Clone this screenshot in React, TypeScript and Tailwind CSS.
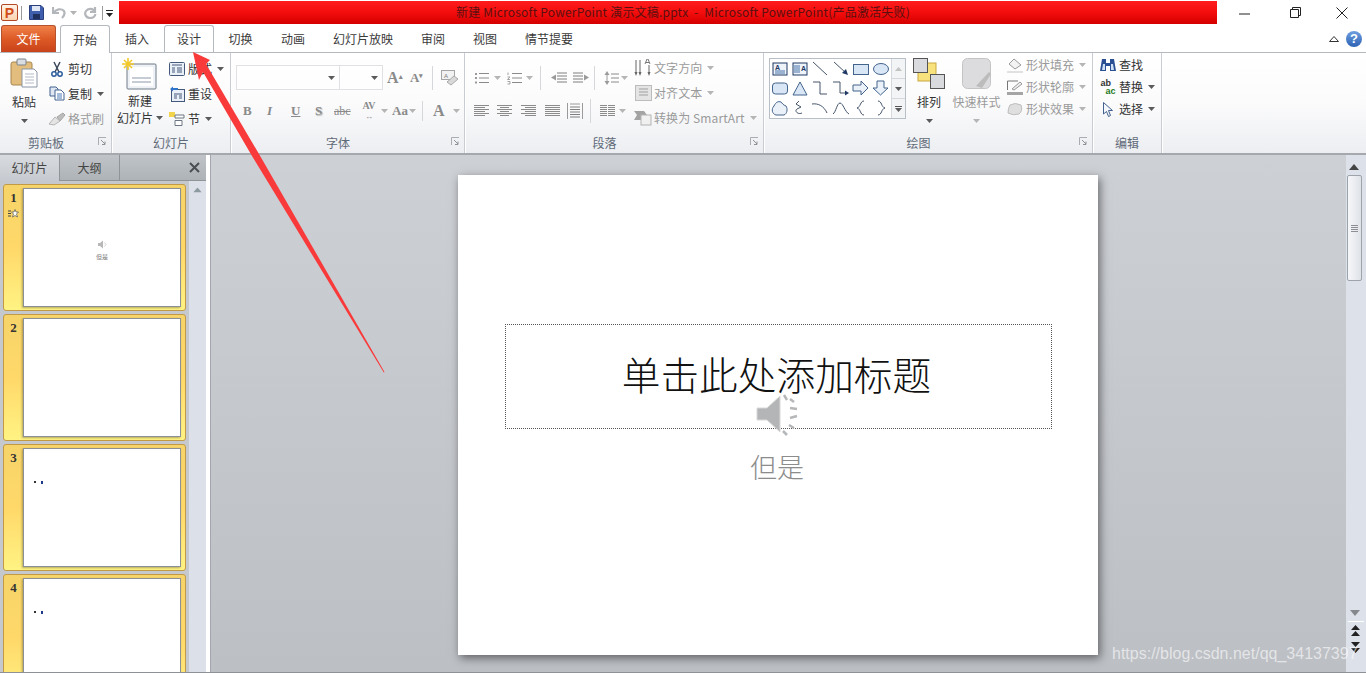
import React from "react";

const FONT = "font-['Noto_Sans_CJK_SC','Noto_Sans',sans-serif]";

function Caret({ c = "#5a5a5a", className = "" }: { c?: string; className?: string }) {
  return (
    <svg width="7" height="4" viewBox="0 0 7 4" className={className}>
      <path d="M0 0H7L3.5 4Z" fill={c} />
    </svg>
  );
}

function Launcher() {
  return (
    <svg width="9" height="9" viewBox="0 0 9 9" className="absolute right-[4px] top-[6px]">
      <path d="M0.5 8V0.5H8" fill="none" stroke="#a9adb3" />
      <path d="M3 3L7 7M7 4.5V7.5H4" fill="none" stroke="#8d9298" />
    </svg>
  );
}

function Group({ w, label, launcher, children }: { w: string; label: string; launcher?: boolean; children: React.ReactNode }) {
  return (
    <div className={`${w} flex flex-col h-full shrink-0 border-r border-[#c9cdd3] shadow-[1px_0_0_#ffffff]`}>
      <div className="flex-1 flex min-h-0">{children}</div>
      <div className={`h-[22px] relative text-center text-[12px] leading-[24px] text-[#5f6a78] ${launcher ? "pr-[19px]" : ""}`}>
        {label}
        {launcher && <Launcher />}
      </div>
    </div>
  );
}

function Small({ icon, label, caret, off, h = "h-[25px]" }: { icon: React.ReactNode; label: string; caret?: boolean; off?: boolean; h?: string }) {
  return (
    <div className={`${h} flex items-center gap-[2px] text-[12px] whitespace-nowrap ${off ? "text-[#9a9a9a]" : "text-[#333]"}`}>
      <span className="w-[18px] h-[18px] flex items-center justify-center shrink-0">{icon}</span>
      <span>{label}</span>
      {caret && <Caret className="ml-[3px]" c={off ? "#b5b5b5" : "#5a5a5a"} />}
    </div>
  );
}

function Lines({ rows, w = 15, c = "#8b8b8b" }: { rows: [number, number][]; w?: number; c?: string }) {
  return (
    <svg width={w} height="14" viewBox={`0 0 ${w} 14`}>
      {rows.map(([x1, x2], i) => (
        <path key={i} d={`M${x1} ${1.5 + i * 2}H${x2}`} stroke={c} />
      ))}
    </svg>
  );
}

function Sep({ h = "h-[24px]" }: { h?: string }) {
  return <span className={`w-px ${h} bg-[#d5d7da] shrink-0 block`} />;
}

const Paste = () => (
  <svg width="28" height="30" viewBox="0 0 28 30">
    <rect x="1" y="4" width="21" height="23" rx="2" fill="#e2bd7d" stroke="#a98650" />
    <rect x="7" y="1" width="9" height="6" rx="1" fill="#d9dde2" stroke="#7a8088" />
    <path d="M12 11H24L27 14V29H12Z" fill="#fff" stroke="#8b96a5" />
    <path d="M15 16H24M15 19H24M15 22H24M15 25H24" stroke="#b3bac4" />
  </svg>
);
const Scissors = () => (
  <svg width="14" height="16" viewBox="0 0 14 16">
    <path d="M4 1L9 11M10 1L5 11" stroke="#3d4a5a" strokeWidth="1.5" />
    <circle cx="4" cy="13" r="2.2" fill="none" stroke="#2c5c9c" strokeWidth="1.5" />
    <circle cx="10" cy="13" r="2.2" fill="none" stroke="#2c5c9c" strokeWidth="1.5" />
  </svg>
);
const CopyI = () => (
  <svg width="16" height="15" viewBox="0 0 16 15">
    <path d="M1 1H7L9 3V10H1Z" fill="#dfe7f2" stroke="#43628f" />
    <path d="M6 4H12L15 7V14H6Z" fill="#fff" stroke="#43628f" />
    <path d="M8 8H13M8 10H13M8 12H13" stroke="#4a78b5" />
  </svg>
);
const Brush = () => (
  <svg width="18" height="14" viewBox="0 0 18 14">
    <path d="M9 5L15 1L17 3L12 9Z" fill="#bdbdbd" stroke="#a5a5a5" />
    <path d="M1 12L7 5L12 9L6 13Z" fill="#e4e4e4" stroke="#b4b4b4" />
  </svg>
);
const NewSlide = () => (
  <svg width="36" height="32" viewBox="0 0 36 32">
    <rect x="5" y="6" width="29" height="25" rx="1" fill="#eef1f5" stroke="#6f7a87" />
    <rect x="8" y="9" width="23" height="19" fill="#fff" />
    <path d="M10 19H29V21H10ZM10 23H29V25H10Z" fill="#c6ccd4" />
    <g stroke="#f2c82c" strokeWidth="1.6"><path d="M6 0V12M0 6H12M2 2L10 10M10 2L2 10" /></g>
  </svg>
);
const LayoutI = () => (
  <svg width="16" height="14" viewBox="0 0 16 14">
    <rect x=".5" y=".5" width="15" height="13" rx="1" fill="#eaf0f7" stroke="#44587a" />
    <path d="M3 3H13M3 6H6M8 6H13M3 8H6M8 8H13M3 10H6M8 10H13" stroke="#44587a" />
  </svg>
);
const ResetI = () => (
  <svg width="16" height="16" viewBox="0 0 16 16">
    <rect x="2.5" y="3.5" width="13" height="12" fill="#eaf0f7" stroke="#44587a" />
    <path d="M5 8H13M5 10H8M10 10H13M5 12H8M10 12H13" stroke="#44587a" />
    <path d="M1 3L4 0.5V2H9V4H4V5.5Z" fill="#2f75c9" />
  </svg>
);
const SectionI = () => (
  <svg width="16" height="14" viewBox="0 0 16 14">
    <rect x="0" y="0" width="6" height="5" fill="#f2d44c" />
    <path d="M6 3H15V6H6ZM6 8.5H13V13.5H6Z" fill="#fff" stroke="#6d7682" />
  </svg>
);

const Bullet = () => (
  <svg width="15" height="14" viewBox="0 0 15 14"><path d="M5 2.5H15M5 7H15M5 11.5H15" stroke="#8b8b8b" /><path d="M1 2H3V4H1ZM1 6H3V8H1ZM1 10.5H3V12.5H1Z" fill="#9a9a9a" /></svg>
);
const Number = () => (
  <svg width="15" height="14" viewBox="0 0 15 14"><path d="M5 2.5H15M5 7H15M5 11.5H15" stroke="#8b8b8b" /><path d="M1 1.5V4M0.5 6H3L0.5 8.5H3M0.5 10.5H3V13H0.5" fill="none" stroke="#a3a3a3" /></svg>
);
const Indent = ({ flip }: { flip?: boolean }) => (
  <svg width="16" height="14" viewBox="0 0 16 14" className="block">
    <path d={flip ? "M0 2H10M0 5H10M0 8H10M0 11H10" : "M6 2H16M6 5H16M6 8H16M6 11H16"} stroke="#7f7f7f" />
    <path d={flip ? "M16 6.5L11 3.5V9.5Z" : "M0 6.5L5 3.5V9.5Z"} fill="#9a9a9a" />
  </svg>
);
const LineSp = () => (
  <svg width="16" height="16" viewBox="0 0 16 16" className="block"><path d="M3 1L5.5 5H.5ZM3 15L5.5 11H.5Z" fill="#9a9a9a" /><path d="M3 5V11" stroke="#9a9a9a" /><path d="M7 4H15M7 8H15M7 12H15" stroke="#8b8b8b" /></svg>
);
const TextDir = () => (
  <svg width="18" height="18" viewBox="0 0 18 18"><path d="M2 1V15M6 1V15M15 6V15" stroke="#666" /><path d="M.5 13L2 17L3.5 13ZM4.5 13L6 17L7.5 13ZM13.5 13L15 17L16.5 13Z" fill="#666" /><path d="M11 5L13 0H14L16 5M12 3.5H15" fill="none" stroke="#777" /></svg>
);
const AlignT = () => (
  <svg width="17" height="16" viewBox="0 0 17 16"><rect x=".5" y=".5" width="16" height="15" fill="#e4e4e4" stroke="#bcbcbc" /><path d="M4 4H13M4 7H13M4 10H13" stroke="#9f9f9f" /></svg>
);
const SmartA = () => (
  <svg width="18" height="16" viewBox="0 0 18 16"><path d="M0 1H10L13 5L10 10H0L3 5Z" fill="#a3a3a3" /><rect x="7" y="5" width="10" height="10" fill="#f0f0f0" stroke="#b3b3b3" /></svg>
);

const sh = { stroke: "#44546a", fill: "none" };
const bf = "#d9e6f5";
const shapes: React.ReactNode[] = [
  <g key="a"><rect x="2" y="2" width="14" height="12" fill="#eef3fa" stroke="#1f3864" /><path d="M4 10H14M4 12H14" stroke="#4472a8" /><text x="4" y="9" fontSize="7" fontWeight="700" fontFamily="Liberation Sans" fill="#1f3864">A</text></g>,
  <g key="b"><rect x="2" y="2" width="14" height="12" fill="#eef3fa" stroke="#1f3864" /><path d="M4 4V12M6 4V12M8 4V12" stroke="#4472a8" /><text x="10" y="10" fontSize="7" fontWeight="700" fontFamily="Liberation Sans" fill="#1f3864">A</text></g>,
  <path key="c" d="M2 1L16 14" {...sh} />,
  <g key="d"><path d="M2 1L14 12" {...sh} /><path d="M16 14L10 12L14 8Z" fill="#1f3864" /></g>,
  <rect key="e" x="1.5" y="3.5" width="15" height="10" fill={bf} stroke="#44648c" />,
  <ellipse key="f" cx="9" cy="8" rx="7.5" ry="5.5" fill={bf} stroke="#44648c" />,
  <rect key="g" x="1.5" y="3" width="15" height="11" rx="3" fill={bf} stroke="#44648c" />,
  <path key="h" d="M9 2L16 15H2Z" fill={bf} stroke="#44648c" />,
  <path key="i" d="M2 2H9V14H16" {...sh} />,
  <g key="j"><path d="M1 2H8V13H14" {...sh} /><path d="M17 13L13 10.5V15.5Z" fill="#1f3864" /></g>,
  <path key="k" d="M1 5H9V1L16 8L9 15V11H1Z" fill="#eaf1f9" stroke="#44648c" />,
  <path key="l" d="M5 1H12V8H16L8.500 15L1 8H5Z" fill="#eaf1f9" stroke="#44648c" />,
  <path key="m" d="M3 6C5 2 7 1 10 2C11 3 12 5 15 6C17 9 16 14 13 15H5C1 14 0 9 3 6Z" fill="#eaf1f9" stroke="#44648c" />,
  <path key="n" d="M8 1L5 4L10 7L6 9C3 11 7 15 11 13" {...sh} />,
  <path key="o" d="M1 4C7 3 13 6 16 13" {...sh} />,
  <path key="p" d="M1 14C4 12 5 3 8 3C11 3 13 12 17 14" {...sh} />,
  <path key="q" d="M12 1C8 1 9 7 5 8C9 9 8 15 12 15" {...sh} />,
  <path key="r" d="M6 1C10 1 9 7 13 8C9 9 10 15 6 15" {...sh} />,
];

function Arrow() {
  return (
    <svg width="260" height="340" viewBox="0 0 260 340" className="absolute left-[180px] top-[45px] pointer-events-none">
      <path d="M13 7L30 15L26 19L79 109L204.500 327L203.800 327.500L72 111L23 27L19 35Z" fill="#f93a3a" />
    </svg>
  );
}

function Thumb({ n, star, children }: { n: number; star?: boolean; children?: React.ReactNode }) {
  return (
    <div className="h-[127px] shrink-0 rounded-[3px] border border-[#c29a45] bg-gradient-to-b from-[#f6d469] via-[#ffd869] to-[#fff383] flex pt-[3px] pr-[3px]">
      <div className="w-[19px] shrink-0 flex flex-col items-center">
        <span className="text-[13px] leading-[16px] font-bold text-[#333] font-['Liberation_Serif',serif] pt-[2px]">{n}</span>
        {star && (
          <svg width="11" height="9" viewBox="0 0 11 9" className="mt-[3px]">
            <path d="M0 2H3M0 4.500H3M0 7H3" stroke="#444" />
            <path d="M7 .5L8 3H10.500L8.500 5L9.500 8L7 6.500L4.500 8L5.500 5L3.500 3H6Z" fill="#fff" stroke="#555" strokeWidth=".7" />
          </svg>
        )}
      </div>
      <div className="w-[158px] h-[119px] bg-white border border-[#8b9096] shadow-[-1px_1px_2px_#0000004d] flex flex-col items-center justify-center relative">
        {children}
      </div>
    </div>
  );
}

const Speaker = ({ s = 1 }: { s?: number }) => (
  <svg width={44 * s} height={44 * s} viewBox="0 0 44 44">
    <path d="M1 16H11L24 4V40L11 28H1Z" fill="#b3b5b7" stroke="#d8d8d8" />
    <g stroke="#b5b7b9" strokeWidth="2.500" fill="none">
      <path d="M28 3L31 8M34 7L38 10M34 16L41 17M34 26L41 24M33 33L38 36M27 39L31 43" />
    </g>
  </svg>
);

export default function App() {
  return (
    <div className={`relative w-[1366px] h-[673px] overflow-hidden bg-white flex flex-col ${FONT}`}>
      {/* title bar */}
      <div className="h-[25px] shrink-0 flex items-center bg-white">
        <div className="w-[17px] h-[17px] ml-[1px] rounded-[2px] border border-[#b24a26] bg-gradient-to-b from-[#fff3e6] to-[#fbd4b0] flex items-center justify-center text-[14px] font-bold text-[#d24c18] font-['Liberation_Sans',sans-serif] leading-none">
          P
        </div>
        <span className="w-px h-[14px] bg-[#9a9a9a] ml-[3px]" />
        <svg width="15" height="15" viewBox="0 0 15 15" className="ml-[7px]">
          <path d="M.5.5H12L14.500 3V14.500H.5Z" fill="#3f5fae" stroke="#2a3f7c" />
          <rect x="3" y="1" width="8" height="5" fill="#dfe7f5" />
          <rect x="4" y="9" width="7" height="5" fill="#1f2f5c" />
        </svg>
        <svg width="14" height="13" viewBox="0 0 14 13" className="ml-[8px]">
          <path d="M1 1V7H7M1.500 7C4 3 9 2 12 5C13 7 12 10 10 12" fill="none" stroke="#b3b6ba" strokeWidth="2.200" />
        </svg>
        <Caret className="ml-[4px]" c="#b3b3b3" />
        <svg width="13" height="13" viewBox="0 0 13 13" className="ml-[7px]">
          <path d="M11 1V6H6M11 6C9 2 4 2 2 5C0 8 2 12 6 12C9 12 11 10 11.500 8" fill="none" stroke="#b3b6ba" strokeWidth="2.200" />
        </svg>
        <span className="w-px h-[14px] bg-[#9a9a9a] ml-[5px]" />
        <svg width="8" height="8" viewBox="0 0 8 8" className="ml-[3px]">
          <path d="M0 1H7V2H0ZM0 4H7L3.500 8Z" fill="#222" />
        </svg>
        <div className="ml-[5px] w-[1098px] h-[23px] mt-[-1px] pl-[30px] bg-gradient-to-b from-[#ff1c1c] via-[#f40d0d] to-[#d40000] flex items-center justify-center text-[12px] text-[#5a1010] whitespace-pre tracking-[0.2px]">
          <span>新建 Microsoft PowerPoint 演示文稿.pptx  -  Microsoft PowerPoint(产品激活失败)</span>
        </div>
        <svg width="12" height="2" viewBox="0 0 12 2" className="ml-[22px] mt-[2px]"><path d="M0 1H11" stroke="#222" /></svg>
        <svg width="11" height="11" viewBox="0 0 11 11" className="ml-[39px]"><path d="M.5 2.500H8.500V10.500H.5ZM2.500 2.500V.5H10.500V8.500H8.500" fill="none" stroke="#222" /></svg>
        <svg width="12" height="12" viewBox="0 0 12 12" className="ml-[35px]"><path d="M.5.5L11.500 11.500M11.500.5L.5 11.500" stroke="#222" /></svg>
      </div>

      {/* tab row */}
      <div className="h-[28px] shrink-0 flex items-end border-b border-[#b4b9c0] bg-white text-[12px] text-[#3b3b3b] relative">
        <div className="w-[55px] h-[27px] ml-[1px] rounded-t-[3px] bg-gradient-to-b from-[#ef8048] via-[#dd5a26] to-[#c8431a] border border-[#b5522d] border-b-0 text-white flex items-center justify-center">文件</div>
        <div className="w-[50px] h-[28px] ml-[4px] rounded-t-[3px] border border-[#b4b9c0] border-b-0 bg-white flex items-center justify-center mb-[-1px]">开始</div>
        <div className="w-[54px] h-[27px] flex items-center justify-center">插入</div>
        <div className="w-[50px] h-[27px] rounded-t-[3px] border border-[#b4b9c0] border-b-0 flex items-center justify-center">设计</div>
        <div className="w-[53px] h-[27px] flex items-center justify-center">切换</div>
        <div className="w-[52px] h-[27px] flex items-center justify-center">动画</div>
        <div className="w-[88px] h-[27px] flex items-center justify-center">幻灯片放映</div>
        <div className="w-[50px] h-[27px] flex items-center justify-center mx-[1px]">审阅</div>
        <div className="w-[52px] h-[27px] flex items-center justify-center">视图</div>
        <div className="w-[76px] h-[27px] flex items-center justify-center">情节提要</div>
        <div className="flex-1 h-[27px] flex items-center justify-end pr-[4px] gap-[7px]">
          <svg width="10" height="7" viewBox="0 0 10 7"><path d="M.5 6.500L5 1.500L9.500 6.500Z" fill="none" stroke="#333" /></svg>
          <span className="w-[16px] h-[16px] rounded-full bg-gradient-to-b from-[#6f9fe0] to-[#2d62b4] text-white text-[13px] font-bold leading-[16px] text-center font-['Liberation_Sans',sans-serif]">?</span>
        </div>
      </div>

      {/* ribbon */}
      <div className="h-[102px] shrink-0 flex bg-gradient-to-b from-white via-[#fbfbfc] to-[#eceef1] border-b-2 border-[#a5a9ae]">
        <Group w="w-[112px]" label="剪贴板" launcher>
          <div className="w-[48px] flex flex-col items-center pt-[5px] text-[12px] text-[#333]">
            <Paste />
            <span className="mt-[5px] leading-[18px]">粘贴</span>
            <Caret className="mt-[8px]" />
          </div>
          <div className="flex flex-col pt-[3px]">
            <Small icon={<Scissors />} label="剪切" />
            <Small icon={<CopyI />} label="复制" caret />
            <Small icon={<Brush />} label="格式刷" off />
          </div>
        </Group>

        <Group w="w-[119px]" label="幻灯片">
          <div className="w-[56px] flex flex-col items-center pt-[5px] text-[12px] leading-[17px] text-[#333]">
            <NewSlide />
            <span className="mt-[2px]">新建</span>
            <span className="whitespace-nowrap flex items-center gap-[3px]">幻灯片<Caret /></span>
          </div>
          <div className="flex flex-col pt-[3px]">
            <Small icon={<LayoutI />} label="版式" caret />
            <Small icon={<ResetI />} label="重设" />
            <Small icon={<SectionI />} label="节" caret />
          </div>
        </Group>

        <Group w="w-[234px]" label="字体" launcher>
          <div className="flex flex-col pl-[5px] pt-[12px]">
            <div className="flex items-center h-[25px]">
              <div className="w-[104px] h-[25px] border border-[#dfe1e4] bg-white/60 flex items-center justify-end pr-[4px]"><Caret /></div>
              <div className="w-[43px] h-[25px] border border-[#dfe1e4] border-l-0 bg-white/60 flex items-center justify-end pr-[4px]"><Caret /></div>
              <span className="ml-[4px] text-[16px] font-bold text-[#8a8a8a] font-['Liberation_Serif',serif] w-[23px]">A<sup className="text-[7px]">▴</sup></span>
              <span className="text-[13px] font-bold text-[#8a8a8a] font-['Liberation_Serif',serif] w-[22px]">A<sup className="text-[7px]">▾</sup></span>
              <Sep />
              <svg width="18" height="16" viewBox="0 0 18 16" className="ml-[8px]"><rect x=".5" y=".5" width="13" height="9" fill="#f2f2f2" stroke="#a5a5a5" /><text x="3" y="8" fontSize="6" fontFamily="Liberation Sans" fill="#777">A</text><path d="M6 12L13 6L17 9L10 15Z" fill="#d9d9d9" stroke="#a9a9a9" /></svg>
            </div>
            <div className="flex items-center h-[22px] mt-[10px] pl-[7px] text-[#8a8a8a] font-['Liberation_Serif',serif] font-bold text-[13px]">
              <span className="w-[24px]">B</span>
              <span className="w-[24px] italic">I</span>
              <span className="w-[24px] underline">U</span>
              <span className="w-[19px] [text-shadow:1px_1px_1px_#aaa]">S</span>
              <span className="w-[23px] font-normal line-through text-[12px]">abc</span>
              <span className="w-[24px] text-[10px] leading-[10px] text-center">AV<br /><span className="text-[8px]">↔</span></span>
              <Caret className="mr-[4px]" c="#b5b5b5" />
              <span className="w-[17px] text-[13px]">Aa</span>
              <Caret className="mr-[6px]" c="#b5b5b5" />
              <Sep h="h-[20px]" />
              <span className="ml-[10px] text-[16px] w-[18px]">A</span>
              <Caret className="ml-[2px]" c="#b5b5b5" />
            </div>
          </div>
        </Group>

        <Group w="w-[299px]" label="段落" launcher>
          <div className="flex flex-col pl-[9px] pt-[12px] w-[169px]">
            <div className="flex items-center h-[25px]">
              <Bullet /><Caret className="ml-[5px] mr-[6px]" c="#b5b5b5" />
              <Number /><Caret className="ml-[4px] mr-[7px]" c="#b5b5b5" />
              <Sep />
              <span className="ml-[10px]"><Indent /></span>
              <span className="ml-[6px]"><Indent flip /></span>
              <span className="ml-[5px]"><Sep /></span>
              <span className="ml-[9px]"><LineSp /></span>
              <Caret className="ml-[1px]" c="#b5b5b5" />
            </div>
            <div className="flex items-center h-[22px] mt-[10px]">
              <Lines rows={[[0,15],[0,11],[0,15],[0,11],[0,15],[0,11]]} />
              <span className="ml-[8px] block h-[14px]"><Lines rows={[[0,15],[3,12],[0,15],[3,12],[0,15],[3,12]]} /></span>
              <span className="ml-[9px] block h-[14px]"><Lines rows={[[0,15],[4,15],[0,15],[4,15],[0,15],[4,15]]} /></span>
              <span className="ml-[9px] block h-[14px]"><Lines rows={[[0,15],[0,15],[0,15],[0,15],[0,15],[0,15]]} /></span>
              <span className="ml-[7px] block h-[16px]">
                <svg width="16" height="16" viewBox="0 0 16 16"><path d="M.5 0V16M15.500 0V16M3 1H13" stroke="#9a9a9a" /><path d="M3 4H13M3 6.500H13M3 9H13M3 11.500H13M3 14H13" stroke="#7f7f7f" /></svg>
              </span>
              <span className="ml-[7px]"><Sep /></span>
              <span className="ml-[9px] block h-[14px]"><Lines rows={[[0,7],[0,7],[0,7],[0,7],[0,7],[0,7]]} w={7} /></span>
              <span className="ml-px block h-[14px]"><Lines rows={[[0,7],[0,7],[0,7],[0,7],[0,7],[0,7]]} w={7} /></span>
              <Caret className="ml-[4px]" c="#b5b5b5" />
            </div>
          </div>
          <div className="flex flex-col pt-[2px] text-[#8d8d8d] tracking-[0.1px]">
            <Small icon={<TextDir />} label="文字方向" caret off />
            <Small icon={<AlignT />} label="对齐文本" caret off />
            <Small icon={<SmartA />} label="转换为 SmartArt" caret off />
          </div>
        </Group>

        <Group w="w-[329px]" label="绘图" launcher>
          <div className="ml-[5px] mt-[5px] w-[137px] h-[61px] border border-[#b9bfc7] bg-white flex shrink-0">
            <div className="w-[121px] grid grid-cols-6 grid-rows-3">
              {shapes.map((s, i) => (
                <div key={i} className="flex items-center justify-center">
                  <svg width="18" height="16" viewBox="0 0 18 16">{s}</svg>
                </div>
              ))}
            </div>
            <div className="w-[14px] flex flex-col border-l border-[#d5d9de] bg-[#f3f4f6]">
              <div className="flex-1 flex items-center justify-center"><Caret className="rotate-180" c="#c2c2c2" /></div>
              <div className="flex-1 flex items-center justify-center border-y border-[#d5d9de]"><Caret /></div>
              <div className="flex-1 flex flex-col items-center justify-center gap-[1px]"><span className="w-[7px] h-px bg-[#555]" /><Caret /></div>
            </div>
          </div>
          <div className="w-[44px] ml-[1px] flex flex-col items-center pt-[5px] text-[12px] text-[#333] shrink-0">
            <svg width="32" height="32" viewBox="0 0 32 32"><rect x="5" y="5" width="18" height="18" fill="#f7e27e" stroke="#c9a83e" /><rect x=".5" y=".5" width="14" height="14" fill="#d9dadd" stroke="#555" /><rect x="17.500" y="16.500" width="14" height="14" fill="#d9dadd" stroke="#555" /></svg>
            <span className="mt-[3px] leading-[18px]">排列</span>
            <Caret className="mt-[8px]" />
          </div>
          <div className="w-[51px] flex flex-col items-center pt-[5px] text-[12px] text-[#9a9a9a] shrink-0">
            <svg width="30" height="32" viewBox="0 0 30 32"><rect x=".5" y=".5" width="28" height="30" rx="5" fill="#dcdcde" stroke="#c4c4c6" /><path d="M14 28L27 14L29 16L20 30Z" fill="#bcbcbc" /></svg>
            <span className="mt-[3px] leading-[18px] whitespace-nowrap">快速样式</span>
            <Caret className="mt-[8px]" c="#b5b5b5" />
          </div>
          <div className="flex flex-col pt-[1px] ml-[4px]">
            <Small h="h-[22px]" off icon={<svg width="16" height="15" viewBox="0 0 16 15"><path d="M7 1L14 7L8 11L2 6Z" fill="#f3f3f3" stroke="#999" /><path d="M0 13H16V15H0Z" fill="#e1e1e1" /></svg>} label="形状填充" caret />
            <Small h="h-[22px]" off icon={<svg width="16" height="15" viewBox="0 0 16 15"><path d="M.5 10V1H11" fill="none" stroke="#777" /><path d="M5 9L13 2L15 4L7 10Z" fill="#eee" stroke="#999" /><path d="M0 12H16V15H0Z" fill="#a5a5a5" /></svg>} label="形状轮廓" caret />
            <Small h="h-[22px]" off icon={<svg width="16" height="13" viewBox="0 0 16 13"><path d="M3 2Q8 -1 14 2Q16 8 12 11Q6 13 1 10Q1 5 3 2Z" fill="#dfdfdf" stroke="#bdbdbd" /></svg>} label="形状效果" caret />
          </div>
        </Group>

        <Group w="w-[69px]" label="编辑">
          <div className="flex flex-col pt-[1px] pl-[6px]">
            <Small h="h-[22px]" icon={<svg width="16" height="14" viewBox="0 0 16 14"><path d="M2 1H6V5H10V1H14L16 13H10V8H6V13H0Z" fill="#2a4f92" /><path d="M3 6H5V12H2ZM11 6H13L14 12H11Z" fill="#cfe0f5" /></svg>} label="查找" />
            <Small h="h-[22px]" icon={<span className="text-[9px] leading-[8px] font-bold font-['Liberation_Sans',sans-serif] text-[#333]">ab<br /><span className="text-[#1f7a1f] pl-[5px]">ac</span></span>} label="替换" caret />
            <Small h="h-[22px]" icon={<svg width="10" height="15" viewBox="0 0 10 15"><path d="M.5.5V12L3.500 9.500L5.500 14.500L7.500 13.500L5.500 8.500H9.500Z" fill="#f4f7fb" stroke="#45618f" /></svg>} label="选择" caret />
          </div>
        </Group>
      </div>

      {/* main */}
      <div className="flex-1 min-h-0 flex border-b border-[#8e9196]">
        {/* slide panel */}
        <div className="w-[206px] shrink-0 flex flex-col bg-[#c5c8cd]">
          <div className="h-[26px] shrink-0 flex text-[12px] bg-gradient-to-b from-[#c0c4c8] to-[#aeb3b7] border-b border-[#8f9499] text-[#444]">
            <div className="w-[60px] h-[26px] bg-gradient-to-b from-[#d8dbde] to-[#c6cad0] border-r border-[#8f9499] text-center leading-[26px]">幻灯片</div>
            <div className="w-[60px] border-r border-[#8f9499] text-center leading-[26px]">大纲</div>
            <div className="flex-1 flex items-center justify-end pr-[6px]">
              <svg width="11" height="11" viewBox="0 0 11 11"><path d="M1 1L10 10M10 1L1 10" stroke="#4a4f54" strokeWidth="2" /></svg>
            </div>
          </div>
          <div className="flex-1 min-h-0 flex overflow-hidden">
            <div className="w-[189px] pl-[3px] pr-[3px] pt-[3px] flex flex-col gap-[3px] overflow-hidden">
              <Thumb n={1} star>
                <svg width="9" height="9" viewBox="0 0 9 9" className="mt-[6px]"><path d="M0 3H2L5 .5V8.500L2 6H0Z" fill="#b5b7b9" /><path d="M6.500 2.500L8 4.500L6.500 6.500" fill="none" stroke="#d0d0d0" /></svg>
                <span className="text-[6px] leading-[9px] text-[#777] mt-[3px]">但是</span>
              </Thumb>
              <Thumb n={2} />
              <Thumb n={3}>
                <span className="absolute left-[10px] top-[32px] w-[2px] h-[2px] bg-[#333]" />
                <span className="absolute left-[17px] top-[32px] w-[2px] h-[3px] bg-[#1f3b8a]" />
              </Thumb>
              <Thumb n={4}>
                <span className="absolute left-[10px] top-[32px] w-[2px] h-[2px] bg-[#333]" />
                <span className="absolute left-[17px] top-[32px] w-[2px] h-[3px] bg-[#1f3b8a]" />
              </Thumb>
            </div>
            <div className="w-[17px] bg-[#dce0e8] flex justify-center pt-[7px] shrink-0">
              <Caret className="rotate-180 scale-125" c="#8d9aa0" />
            </div>
          </div>
        </div>
        {/* splitter */}
        <div className="w-[5px] shrink-0 bg-white border-r border-[#a3a7ad]" />
        {/* canvas */}
        <div className="flex-1 min-w-0 bg-gradient-to-b from-[#cdd0d5] to-[#bcbfc4] pt-[20px] pl-[247px]">
          <div className="w-[640px] h-[480px] bg-white shadow-[2px_3px_9px_#00000080] pt-[149px] px-[47px] flex flex-col items-center relative">
            <div className="w-[547px] h-[105px] shrink-0 border border-dotted border-[#555] text-[38.700px] text-[#111] font-light text-center leading-[96px] pr-[3px]">
              单击此处添加标题
            </div>
            <div className="absolute left-[298px] top-[217px]"><Speaker /></div>
            <div className="text-[27px] leading-[36px] mt-[20px] mr-[2px] text-[#8c8c8c] font-light">但是</div>
          </div>
        </div>
        {/* scrollbar */}
        <div className="w-[20px] shrink-0 bg-[#dde1ea] flex flex-col items-center pt-[9px]">
          <svg width="10" height="6" viewBox="0 0 10 6" className="mr-[4px]"><path d="M0 6L5 0L10 6Z" fill="#444" /></svg>
          <div className="w-[15px] h-[106px] mt-[5px] mr-[4px] border border-[#9da3ab] rounded-[2px] bg-gradient-to-r from-[#f6f7f9] to-[#dfe2e8] flex flex-col items-center justify-center gap-[1px]">
            <span className="w-[7px] h-px bg-[#8b8f95]" /><span className="w-[7px] h-px bg-[#8b8f95]" /><span className="w-[7px] h-px bg-[#8b8f95]" /><span className="w-[7px] h-px bg-[#8b8f95]" />
          </div>
          <div className="flex-1" />
          <svg width="10" height="6" viewBox="0 0 10 6" className="mr-[2px]"><path d="M0 0L5 6L10 0Z" fill="#85898e" /></svg>
          <div className="h-px w-[16px] bg-white mt-[5px] mr-[1px]" />
          <div className="h-[50px] flex flex-col items-center pt-[3px] mr-[2px]">
            <svg width="9" height="12" viewBox="0 0 9 12"><path d="M0 5L4.500 0L9 5ZM0 11H9L4.500 6Z" fill="#222" /></svg>
            <svg width="9" height="12" viewBox="0 0 9 12" className="mt-[4px]"><path d="M0 1H9L4.500 6ZM0 7H9L4.500 12Z" fill="#222" /></svg>
          </div>
        </div>
      </div>

      <Arrow />
      <div className="absolute left-[1112px] top-[643px] text-[16px] leading-[22px] text-white/60 font-['Liberation_Sans',sans-serif] whitespace-nowrap">
        https://blog.csdn.net/qq_34137397
      </div>
    </div>
  );
}
